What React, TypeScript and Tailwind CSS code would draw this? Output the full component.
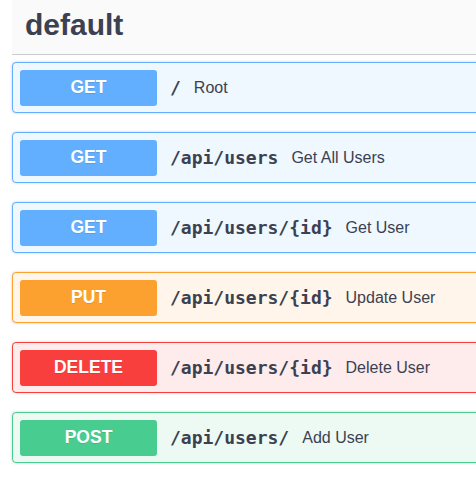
type Op = {
  method: string;
  path: string;
  summary: string;
  badge: string;
  bg: string;
  border: string;
};

const ops: Op[] = [
  { method: "GET", path: "/", summary: "Root", badge: "bg-[#61affe]", bg: "bg-[#eff7ff]", border: "border-[#61affe]" },
  { method: "GET", path: "/api/users", summary: "Get All Users", badge: "bg-[#61affe]", bg: "bg-[#eff7ff]", border: "border-[#61affe]" },
  { method: "GET", path: "/api/users/{id}", summary: "Get User", badge: "bg-[#61affe]", bg: "bg-[#eff7ff]", border: "border-[#61affe]" },
  { method: "PUT", path: "/api/users/{id}", summary: "Update User", badge: "bg-[#fca130]", bg: "bg-[#fff5ea]", border: "border-[#fca130]" },
  { method: "DELETE", path: "/api/users/{id}", summary: "Delete User", badge: "bg-[#f93e3e]", bg: "bg-[#feebeb]", border: "border-[#f93e3e]" },
  { method: "POST", path: "/api/users/", summary: "Add User", badge: "bg-[#49cc90]", bg: "bg-[#edfaf4]", border: "border-[#49cc90]" },
];

function OpBlock({ op }: { op: Op }) {
  return (
    <div
      className={`w-[470px] h-[51px] border ${op.border} ${op.bg} rounded-[4px] shadow-[0_0_3px_rgba(0,0,0,0.19)] flex items-center px-[7px]`}
    >
      <span
        className={`${op.badge} w-[137px] h-[36px] rounded-[3px] flex items-center justify-center text-white text-[17.5px] font-bold [text-shadow:0_1px_0_rgba(0,0,0,0.1)]`}
      >
        {op.method}
      </span>
      <span className="ml-[13px] font-['DejaVu_Sans_Mono',monospace] font-bold text-[18px] text-[#3b4151]">
        {op.path}
      </span>
      <span className="ml-[13px] text-[16px] text-[#3b4151]">{op.summary}</span>
    </div>
  );
}

export default function App() {
  return (
    <div className="w-[476px] h-[480px] overflow-hidden bg-white font-['Liberation_Sans',Arial,sans-serif]">
      <div className="pl-3 w-[490px]">
        <h3 className="h-[55px] bg-[#fafafa] border-b border-[#cccccf] pl-[13px] pt-[10px] text-[30px] leading-[30px] font-bold text-[#3b4151]">
          default
        </h3>
        <div className="pt-[7px] flex flex-col gap-[19px]">
          {ops.map((op, i) => (
            <OpBlock key={i} op={op} />
          ))}
        </div>
      </div>
    </div>
  );
}
